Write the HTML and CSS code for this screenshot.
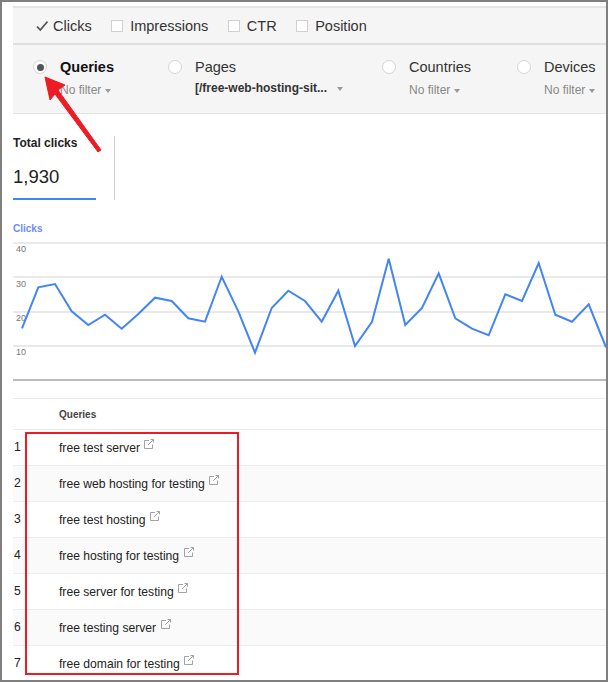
FILE: index.html
```html
<!DOCTYPE html>
<html lang="en">
<head>
  <meta charset="UTF-8">
  <title>Search Analytics</title>
  <link rel="stylesheet" href="styles.css">
</head>
<body>
  <div class="frame">

    <div class="filters">
      <div class="metrics">
        <label class="metric">
          <svg class="tick" width="12" height="12" viewBox="0 0 12 12"><path d="M1 6.5 L4.3 10 L11.5 1.5" fill="none" stroke="#555" stroke-width="1.8"/></svg>
          Clicks
        </label>
        <label class="metric"><span class="box"></span>Impressions</label>
        <label class="metric"><span class="box"></span>CTR</label>
        <label class="metric"><span class="box"></span>Position</label>
      </div>

      <div class="groups">
        <div class="group">
          <span class="radio radio-on"></span>
          <div>
            <div class="group-name group-name-on">Queries</div>
            <div class="group-filter">No filter<span class="caret"></span></div>
          </div>
        </div>
        <div class="group">
          <span class="radio"></span>
          <div>
            <div class="group-name">Pages</div>
            <div class="group-filter group-filter-set">[/free-web-hosting-sit...<span class="caret caret-wide"></span></div>
          </div>
        </div>
        <div class="group">
          <span class="radio"></span>
          <div>
            <div class="group-name">Countries</div>
            <div class="group-filter">No filter<span class="caret"></span></div>
          </div>
        </div>
        <div class="group">
          <span class="radio"></span>
          <div>
            <div class="group-name">Devices</div>
            <div class="group-filter">No filter<span class="caret"></span></div>
          </div>
        </div>
      </div>
    </div>

    <div class="totals">
      <div class="total">
        <div class="total-label">Total clicks</div>
        <div class="total-value">1,930</div>
      </div>
    </div>

    <div class="chart-title">Clicks</div>
    <svg class="chart" width="593" height="142" viewBox="13 240 593 142">
      <g stroke="#e2e2e2" stroke-width="1.4">
        <line x1="13" y1="243" x2="606" y2="243"/>
        <line x1="13" y1="277" x2="606" y2="277"/>
        <line x1="13" y1="312" x2="606" y2="312"/>
        <line x1="13" y1="346" x2="606" y2="346"/>
      </g>
      <line x1="13" y1="380" x2="606" y2="380" stroke="#a6a6a6" stroke-width="1.4"/>
      <g class="chart-axis">
        <text x="16" y="252">40</text>
        <text x="16" y="287">30</text>
        <text x="16" y="321">20</text>
        <text x="16" y="355">10</text>
      </g>
      <polyline fill="none" stroke="#4285f4" stroke-width="2" points="22,328.3 38.3,287.3 55,284 71.7,311.3 88.3,325 105,314.7 121.7,328.7 138.3,314 155,297.7 171.7,301 188.3,318.3 205,321.7 221.7,276.7 238.3,311.3 255,352.7 271.7,308 288.3,290.7 305,301 321.7,321.7 338.3,290.7 355,346 372,321.7 388.7,258.7 405.3,325 422,308 438.7,273.3 455.3,318.3 472,328.7 488.7,335.3 505.3,294.3 522,301 538.7,263 555.3,314.7 572,321.7 588.7,304.3 606,347.3"/>
    </svg>

    <div class="table">
      <div class="row row-head"><span></span><span>Queries</span></div>
      <div class="row"><span>1</span><span>free test server<svg class="ext" width="10" height="10" viewBox="0 0 10 10"><use href="#ext"/></svg></span></div>
      <div class="row row-alt"><span>2</span><span>free web hosting for testing<svg class="ext" width="10" height="10" viewBox="0 0 10 10"><use href="#ext"/></svg></span></div>
      <div class="row"><span>3</span><span>free test hosting<svg class="ext" width="10" height="10" viewBox="0 0 10 10"><use href="#ext"/></svg></span></div>
      <div class="row row-alt"><span>4</span><span>free hosting for testing<svg class="ext" width="10" height="10" viewBox="0 0 10 10"><use href="#ext"/></svg></span></div>
      <div class="row"><span>5</span><span>free server for testing<svg class="ext" width="10" height="10" viewBox="0 0 10 10"><use href="#ext"/></svg></span></div>
      <div class="row row-alt"><span>6</span><span>free testing server<svg class="ext" width="10" height="10" viewBox="0 0 10 10"><use href="#ext"/></svg></span></div>
      <div class="row"><span>7</span><span>free domain for testing<svg class="ext" width="10" height="10" viewBox="0 0 10 10"><use href="#ext"/></svg></span></div>
    </div>

    <!-- annotations drawn over the screenshot -->
    <div class="highlight"></div>
    <svg class="arrow" width="70" height="90" viewBox="40 70 70 90">
      <path d="M45 77 L65 85 L58 90 L101 150 L98 152 L55 94 L50 100 Z" fill="#ed1c24" stroke="#ed1c24" stroke-width="1" stroke-linejoin="round"/>
    </svg>
  </div>

  <svg width="0" height="0" class="defs">
    <symbol id="ext" viewBox="0 0 10 10">
      <path d="M5 1.5 H0.5 V9.5 H8.5 V5.5 M4 6 L9.5 0.5 M6.5 0.5 H9.5 V3.5" fill="none" stroke="#999" stroke-width="0.9"/>
    </symbol>
  </svg>
</body>
</html>
```

FILE: styles.css
```css
html, body {
  margin: 0;
  padding: 0;
}

body {
  font-family: "Liberation Sans", Arial, sans-serif;
  background: #fff;
  color: #222;
  overflow: hidden;
}

.frame {
  position: relative;
  box-sizing: border-box;
  width: 608px;
  height: 682px;
  padding: 4px 0 0 11px;
  border: 2px solid #7f7f7f;
  overflow: hidden;
}

.defs {
  position: absolute;
}

/* filter panel */
.filters {
  background: #f5f5f5;
  border-top: 2px solid #e5e5e5;
  border-bottom: 1px solid #e5e5e5;
}

.metrics {
  display: flex;
  align-items: center;
  height: 35px;
  padding-left: 23px;
  border-bottom: 2px solid #e0e0e0;
  font-size: 14.5px;
  color: #333;
}

.metric {
  display: flex;
  align-items: center;
  gap: 7px;
  margin-right: 19.5px;
}

.tick {
  margin-right: -2px;
}

.box {
  box-sizing: border-box;
  width: 12px;
  height: 12px;
  background: #fff;
  border: 1px solid #d0d0d0;
}

.groups {
  display: grid;
  grid-template-columns: 135px 214px 135px 1fr;
  height: 68px;
  padding-left: 20px;
}

.group {
  display: flex;
  gap: 13px;
  padding-top: 13px;
}

.radio {
  box-sizing: border-box;
  flex: none;
  display: flex;
  align-items: center;
  justify-content: center;
  width: 14px;
  height: 14px;
  margin-top: 2px;
  background: #fff;
  border: 1px solid #d4d4d4;
  border-radius: 50%;
}

.radio-on::after {
  content: "";
  width: 7px;
  height: 7px;
  background: #555;
  border-radius: 50%;
}

.group-name {
  height: 18px;
  font-size: 14.5px;
  line-height: 18px;
  color: #333;
}

.group-name-on {
  font-weight: bold;
  color: #111;
}

.group-filter {
  margin-top: 7px;
  font-size: 12px;
  line-height: 14px;
  color: #888;
}

.group-filter-set {
  margin-top: 5px;
  font-weight: bold;
  color: #333;
}

.caret {
  display: inline-block;
  margin-left: 4px;
  vertical-align: middle;
  border-top: 4px solid #999;
  border-left: 3.5px solid transparent;
  border-right: 3.5px solid transparent;
}

.caret-wide {
  margin-left: 10px;
}

/* totals */
.totals {
  display: flex;
  height: 64px;
  margin-top: 22px;
}

.total {
  box-sizing: border-box;
  width: 102px;
  height: 64px;
  border-right: 1px solid #ccc;
}

.total-label {
  font-size: 12px;
  font-weight: bold;
  line-height: 14px;
  color: #222;
}

.total-value {
  box-sizing: border-box;
  width: 83px;
  height: 50px;
  padding-top: 16px;
  border-bottom: 2px solid #4285f4;
  font-size: 18.5px;
  line-height: 21px;
}

/* chart */
.chart-title {
  margin-top: 22px;
  height: 14px;
  font-size: 10px;
  font-weight: bold;
  line-height: 14px;
  color: #6d8cf5;
}

.chart {
  display: block;
  margin-top: 4px;
}

.chart-axis {
  font-size: 9px;
  fill: #777;
}

/* query table */
.table {
  margin-top: 16px;
  border-top: 1px solid #ececec;
  font-size: 12.15px;
  color: #222;
}

.row {
  display: grid;
  grid-template-columns: 45px 1fr;
  align-items: center;
  box-sizing: border-box;
  height: 36px;
  padding: 0 0 1px 1px;
  border-bottom: 1px solid #ececec;
}

.row-head {
  height: 31px;
  padding-bottom: 0;
  font-size: 10px;
  font-weight: bold;
  color: #444;
}

.row-alt {
  background: #fafafa;
}

.ext {
  margin-left: 4.5px;
  vertical-align: 3px;
}

/* annotations */
.highlight {
  position: absolute;
  left: 23px;
  top: 430px;
  box-sizing: border-box;
  width: 214px;
  height: 243px;
  border: 2px solid #ed1c24;
}

.arrow {
  position: absolute;
  left: 38px;
  top: 68px;
}
```
